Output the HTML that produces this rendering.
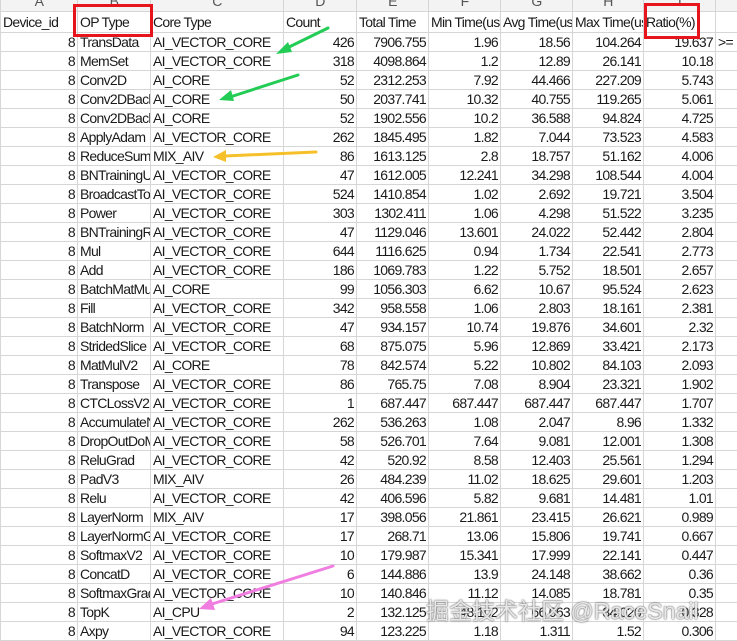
<!DOCTYPE html>
<html><head><meta charset="utf-8"><style>
body{margin:0;width:737px;height:638px;overflow:hidden;background:#fff;position:relative;font-family:"Liberation Sans","Noto Sans CJK SC",sans-serif;}
table{border-collapse:collapse;table-layout:fixed;position:absolute;left:0;top:-9px;width:760px}
td{border:1px solid #d6d6d6;height:18px;padding:0 2px;font-size:14px;letter-spacing:-0.7px;color:#1a1a1a;white-space:nowrap;overflow:hidden;text-align:right;line-height:18px}
td.l{text-align:left;text-overflow:clip}
tr.h td{height:19px;text-align:center;color:#555;background:#f3f3f3;font-size:14px;line-height:19px}
tr.r1 td{height:20px;text-align:left}
svg{position:absolute;left:0;top:0}
.wm{position:absolute;left:426px;top:592px;font-size:23px;color:rgba(255,255,255,0.85);text-shadow:0 0 1px #555,0 0 2px #777;letter-spacing:0}
</style></head><body>
<table>
<colgroup><col style="width:77px"><col style="width:73px"><col style="width:133px"><col style="width:73px"><col style="width:72px"><col style="width:72px"><col style="width:72px"><col style="width:71px"><col style="width:72px"><col style="width:45px"></colgroup>
<tr class="h"><td>A</td><td>B</td><td>C</td><td>D</td><td>E</td><td>F</td><td>G</td><td>H</td><td>I</td><td></td></tr>
<tr class="r1"><td>Device_id</td><td>OP Type</td><td>Core Type</td><td>Count</td><td>Total Time</td><td>Min Time(us)</td><td>Avg Time(us)</td><td>Max Time(us)</td><td>Ratio(%)</td><td></td></tr>
<tr><td>8</td><td class="l">TransData</td><td class="l">AI_VECTOR_CORE</td><td>426</td><td>7906.755</td><td>1.96</td><td>18.56</td><td>104.264</td><td>19.637</td><td class="l">&gt;=</td></tr>
<tr><td>8</td><td class="l">MemSet</td><td class="l">AI_VECTOR_CORE</td><td>318</td><td>4098.864</td><td>1.2</td><td>12.89</td><td>26.141</td><td>10.18</td><td></td></tr>
<tr><td>8</td><td class="l">Conv2D</td><td class="l">AI_CORE</td><td>52</td><td>2312.253</td><td>7.92</td><td>44.466</td><td>227.209</td><td>5.743</td><td></td></tr>
<tr><td>8</td><td class="l">Conv2DBackprop</td><td class="l">AI_CORE</td><td>50</td><td>2037.741</td><td>10.32</td><td>40.755</td><td>119.265</td><td>5.061</td><td></td></tr>
<tr><td>8</td><td class="l">Conv2DBackprop</td><td class="l">AI_CORE</td><td>52</td><td>1902.556</td><td>10.2</td><td>36.588</td><td>94.824</td><td>4.725</td><td></td></tr>
<tr><td>8</td><td class="l">ApplyAdam</td><td class="l">AI_VECTOR_CORE</td><td>262</td><td>1845.495</td><td>1.82</td><td>7.044</td><td>73.523</td><td>4.583</td><td></td></tr>
<tr><td>8</td><td class="l">ReduceSum</td><td class="l">MIX_AIV</td><td>86</td><td>1613.125</td><td>2.8</td><td>18.757</td><td>51.162</td><td>4.006</td><td></td></tr>
<tr><td>8</td><td class="l">BNTrainingUpdate</td><td class="l">AI_VECTOR_CORE</td><td>47</td><td>1612.005</td><td>12.241</td><td>34.298</td><td>108.544</td><td>4.004</td><td></td></tr>
<tr><td>8</td><td class="l">BroadcastTo</td><td class="l">AI_VECTOR_CORE</td><td>524</td><td>1410.854</td><td>1.02</td><td>2.692</td><td>19.721</td><td>3.504</td><td></td></tr>
<tr><td>8</td><td class="l">Power</td><td class="l">AI_VECTOR_CORE</td><td>303</td><td>1302.411</td><td>1.06</td><td>4.298</td><td>51.522</td><td>3.235</td><td></td></tr>
<tr><td>8</td><td class="l">BNTrainingReduce</td><td class="l">AI_VECTOR_CORE</td><td>47</td><td>1129.046</td><td>13.601</td><td>24.022</td><td>52.442</td><td>2.804</td><td></td></tr>
<tr><td>8</td><td class="l">Mul</td><td class="l">AI_VECTOR_CORE</td><td>644</td><td>1116.625</td><td>0.94</td><td>1.734</td><td>22.541</td><td>2.773</td><td></td></tr>
<tr><td>8</td><td class="l">Add</td><td class="l">AI_VECTOR_CORE</td><td>186</td><td>1069.783</td><td>1.22</td><td>5.752</td><td>18.501</td><td>2.657</td><td></td></tr>
<tr><td>8</td><td class="l">BatchMatMul</td><td class="l">AI_CORE</td><td>99</td><td>1056.303</td><td>6.62</td><td>10.67</td><td>95.524</td><td>2.623</td><td></td></tr>
<tr><td>8</td><td class="l">Fill</td><td class="l">AI_VECTOR_CORE</td><td>342</td><td>958.558</td><td>1.06</td><td>2.803</td><td>18.161</td><td>2.381</td><td></td></tr>
<tr><td>8</td><td class="l">BatchNorm</td><td class="l">AI_VECTOR_CORE</td><td>47</td><td>934.157</td><td>10.74</td><td>19.876</td><td>34.601</td><td>2.32</td><td></td></tr>
<tr><td>8</td><td class="l">StridedSlice</td><td class="l">AI_VECTOR_CORE</td><td>68</td><td>875.075</td><td>5.96</td><td>12.869</td><td>33.421</td><td>2.173</td><td></td></tr>
<tr><td>8</td><td class="l">MatMulV2</td><td class="l">AI_CORE</td><td>78</td><td>842.574</td><td>5.22</td><td>10.802</td><td>84.103</td><td>2.093</td><td></td></tr>
<tr><td>8</td><td class="l">Transpose</td><td class="l">AI_VECTOR_CORE</td><td>86</td><td>765.75</td><td>7.08</td><td>8.904</td><td>23.321</td><td>1.902</td><td></td></tr>
<tr><td>8</td><td class="l">CTCLossV2</td><td class="l">AI_VECTOR_CORE</td><td>1</td><td>687.447</td><td>687.447</td><td>687.447</td><td>687.447</td><td>1.707</td><td></td></tr>
<tr><td>8</td><td class="l">AccumulateNV2</td><td class="l">AI_VECTOR_CORE</td><td>262</td><td>536.263</td><td>1.08</td><td>2.047</td><td>8.96</td><td>1.332</td><td></td></tr>
<tr><td>8</td><td class="l">DropOutDoMask</td><td class="l">AI_VECTOR_CORE</td><td>58</td><td>526.701</td><td>7.64</td><td>9.081</td><td>12.001</td><td>1.308</td><td></td></tr>
<tr><td>8</td><td class="l">ReluGrad</td><td class="l">AI_VECTOR_CORE</td><td>42</td><td>520.92</td><td>8.58</td><td>12.403</td><td>25.561</td><td>1.294</td><td></td></tr>
<tr><td>8</td><td class="l">PadV3</td><td class="l">MIX_AIV</td><td>26</td><td>484.239</td><td>11.02</td><td>18.625</td><td>29.601</td><td>1.203</td><td></td></tr>
<tr><td>8</td><td class="l">Relu</td><td class="l">AI_VECTOR_CORE</td><td>42</td><td>406.596</td><td>5.82</td><td>9.681</td><td>14.481</td><td>1.01</td><td></td></tr>
<tr><td>8</td><td class="l">LayerNorm</td><td class="l">MIX_AIV</td><td>17</td><td>398.056</td><td>21.861</td><td>23.415</td><td>26.621</td><td>0.989</td><td></td></tr>
<tr><td>8</td><td class="l">LayerNormGrad</td><td class="l">AI_VECTOR_CORE</td><td>17</td><td>268.71</td><td>13.06</td><td>15.806</td><td>19.741</td><td>0.667</td><td></td></tr>
<tr><td>8</td><td class="l">SoftmaxV2</td><td class="l">AI_VECTOR_CORE</td><td>10</td><td>179.987</td><td>15.341</td><td>17.999</td><td>22.141</td><td>0.447</td><td></td></tr>
<tr><td>8</td><td class="l">ConcatD</td><td class="l">AI_VECTOR_CORE</td><td>6</td><td>144.886</td><td>13.9</td><td>24.148</td><td>38.662</td><td>0.36</td><td></td></tr>
<tr><td>8</td><td class="l">SoftmaxGrad</td><td class="l">AI_VECTOR_CORE</td><td>10</td><td>140.846</td><td>11.12</td><td>14.085</td><td>18.781</td><td>0.35</td><td></td></tr>
<tr><td>8</td><td class="l">TopK</td><td class="l">AI_CPU</td><td>2</td><td>132.125</td><td>48.102</td><td>66.063</td><td>84.026</td><td>0.328</td><td></td></tr>
<tr><td>8</td><td class="l">Axpy</td><td class="l">AI_VECTOR_CORE</td><td>94</td><td>123.225</td><td>1.18</td><td>1.311</td><td>1.52</td><td>0.306</td><td></td></tr>
</table>
<div class="wm">掘金技术社区 @RaceSnail</div>
<svg width="737" height="638">
<rect x="74.5" y="5.5" width="77" height="30" fill="none" stroke="#e8141c" stroke-width="3"/>
<rect x="645.5" y="4.5" width="53" height="33" fill="none" stroke="#e8141c" stroke-width="3"/>
<g stroke-width="3" stroke-linecap="round">
<line x1="328" y1="28" x2="285" y2="49" stroke="#22cc55"/>
<polygon points="276,54 288,42 292,52" fill="#22cc55"/>
<line x1="298" y1="75" x2="230" y2="97" stroke="#22cc55"/>
<polygon points="219,100 231,90 234,101" fill="#22cc55"/>
<line x1="316" y1="152" x2="225" y2="156" stroke="#f5c02a"/>
<polygon points="213,157 226,150 226,162" fill="#f5c02a"/>
<line x1="333" y1="566" x2="212" y2="604" stroke="#f07ee0"/>
<polygon points="199,609 211,598 215,610" fill="#f07ee0"/>
</g>
</svg>
</body></html>
